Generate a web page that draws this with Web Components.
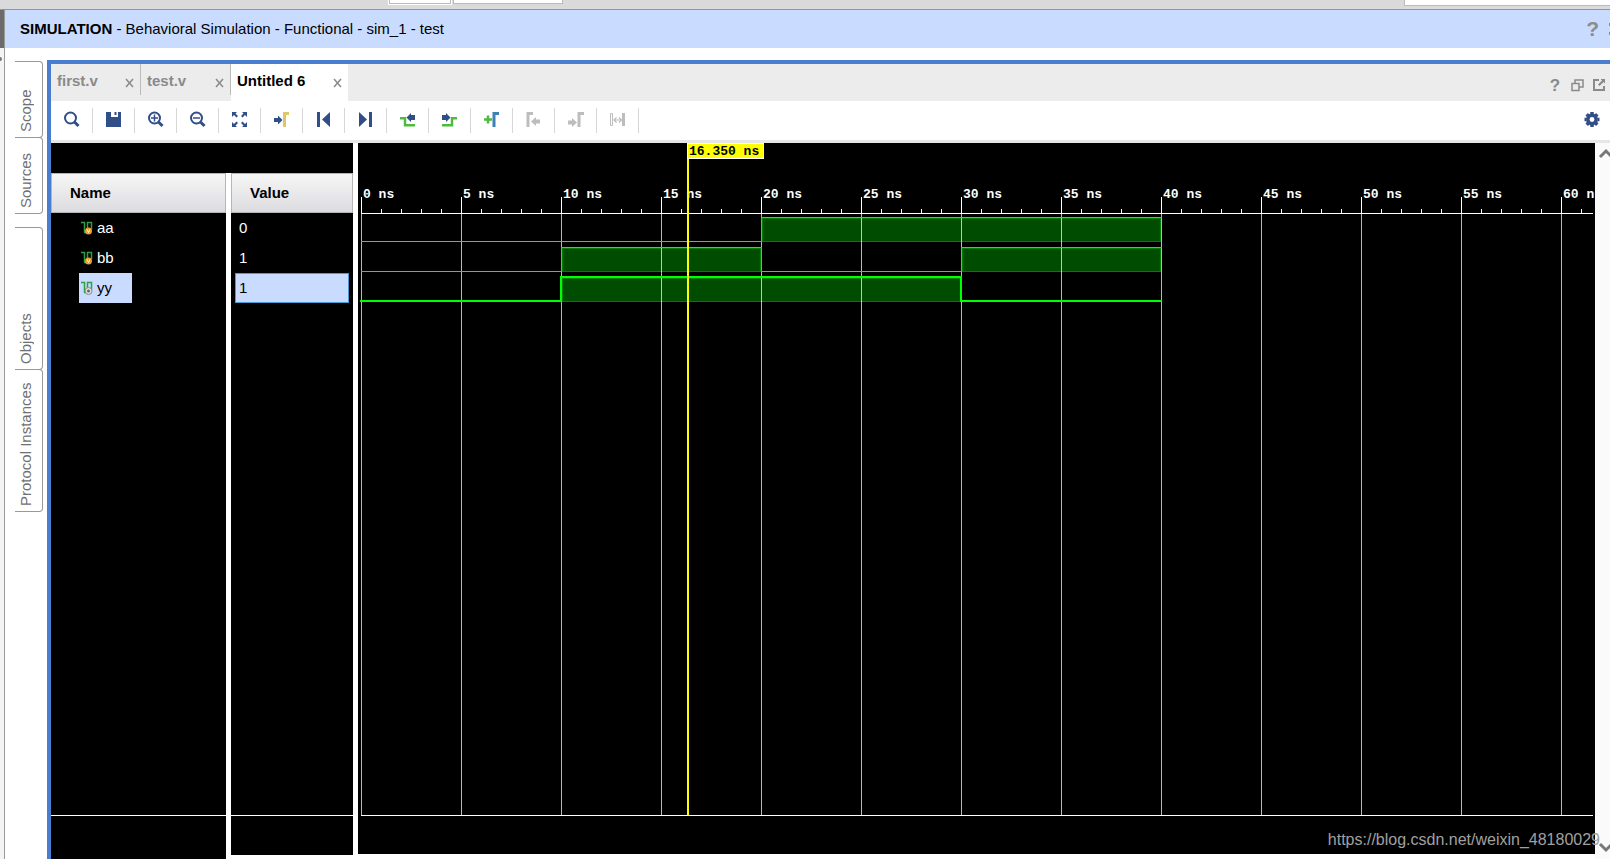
<!DOCTYPE html>
<html lang="en">
<head>
<meta charset="utf-8">
<title>Simulation</title>
<style>
html, body { margin: 0; height: 100%; }
body { font: 15px/20px "Liberation Sans", Arial, sans-serif; color: #000; background: #fff; overflow: hidden; }
</style>
</head>
<body>
<sim-app></sim-app>
<script>
const define = (name, html, setup) => {
  const t = document.createElement('template');
  t.innerHTML = html;
  customElements.define(name, class extends HTMLElement {
    connectedCallback() {
      if (this.shadowRoot) return;
      const root = this.attachShadow({ mode: 'open' });
      root.append(t.content.cloneNode(true));
      if (setup) setup(this, root);
    }
  });
};

const N = '#324e86', G = '#4cbb3e', Y = '#dfc766', D = '#bdbdbd', B = '#3c82b4';
const lens = `<circle cx="6.500" cy="7" r="5.500"/><path d="M10.500 11l4 4" stroke-width="3"/>`;
const signal = `<path fill="none" stroke="#2f9e44" stroke-width="1.500" d="M0 2.500h3.500v10M3 12.500h3.500V2.500h4v7"/>`;
const icons = {
  search: `<g fill="none" stroke="${N}" stroke-width="2">${lens}</g>`,
  save: `<path fill="${N}" d="M0 1h5v5h7V1h3v15H0z"/><path fill="${N}" d="M8.500 1h2v3h-2z"/>`,
  zoomin: `<g fill="none" stroke="${N}" stroke-width="2">${lens}<path d="M3 7h7M6.500 3.500v7" stroke-width="1.500"/></g>`,
  zoomout: `<g fill="none" stroke="${N}" stroke-width="2">${lens}<path d="M3 7h7" stroke-width="1.500"/></g>`,
  fit: `<g fill="${N}"><path d="M0 1h5L3.500 2.500 6 5 4.500 6.500 2 4 0 6zM15 1h-5l1.500 1.500L9 5l1.500 1.500L13 4l2 2zM0 16h5l-1.500-1.500L6 12l-1.500-1.500L2 13l-2-2zM15 16h-5l1.500-1.500L9 12l1.500-1.500L13 13l2-2z"/></g>`,
  gocursor: `<path fill="${N}" d="M0 7h4V4.500L8.500 9 4 13.500V11H0z"/><path d="M10.500 16V2.500H15" fill="none" stroke="${Y}" stroke-width="3"/>`,
  first: `<path fill="${N}" d="M1 1h3v15H1zM14 1v15L6 8.500z"/>`,
  last: `<path fill="${N}" d="M1 1v15l8-7.500zM11 1h3v15h-3z"/>`,
  prevtrans: `<path d="M0 7.200h5v7h10" fill="none" stroke="${G}" stroke-width="2.500"/><path fill="${N}" d="M15 4v5h-4v2L6.500 6.500 11 2v2z"/>`,
  nexttrans: `<path d="M0 14.200h10v-7h5" fill="none" stroke="${G}" stroke-width="2.500"/><path fill="${N}" d="M0 4v5h4v2l4.500-4.500L4 2v2z"/>`,
  addmarker: `<path d="M0 8.500h8M4 4.500v8" stroke="${G}" stroke-width="2.500"/><path d="M10 16V2.500h5" fill="none" stroke="${B}" stroke-width="3"/>`,
  prevmarker: `<path d="M2 16V2.500h5" fill="none" stroke="${D}" stroke-width="3"/><path fill="${D}" d="M14 8.500v4h-4V15l-5-4.500L10 6v2.500z"/>`,
  nextmarker: `<path d="M11 16V2.500h5" fill="none" stroke="${D}" stroke-width="3"/><path fill="${D}" d="M0 9.500v4h4V16l5-4.500L4 7v2.500z"/>`,
  swap: `<g fill="none" stroke="${D}"><path d="M.5 2.500h2v12h-2z"/><path d="M13.500 2v13" stroke-width="3"/><path d="M4 9h7M6.500 6.500L4 9l2.500 2.500M9 6.500L11.500 9 9 11.500" stroke-width="1.200"/></g>`,
  gear: `<g fill="none" stroke="${N}"><circle cx="8" cy="8.500" r="4.200" stroke-width="3.500"/><path stroke-width="3.500" d="M8 1v2M8 14v2M.5 8.500h2M13.500 8.500h2M2.700 3.200l1.500 1.500M11.800 12.300l1.500 1.500M13.300 3.200l-1.500 1.500M4.200 12.300l-1.500 1.500"/></g>`,
  restore: `<path fill="none" stroke="#8a8a8a" stroke-width="1.500" d="M6 6V3h8v7h-4M3 6.500h7v7H3z"/>`,
  float: `<path fill="none" stroke="#8a8a8a" stroke-width="2" d="M8 3H3v10h10V9"/><path fill="#8a8a8a" d="M9.500 2H14v4.500l-1.500-1.500-4 4-1.500-1.500 4-4z"/>`,
  up: `<path fill="none" stroke="#777" stroke-width="3" d="M2 12l6-6 6 6"/>`,
  down: `<path fill="none" stroke="#777" stroke-width="3" d="M2 5l6 6 6-6"/>`,
  sigv: `${signal}<circle cx="7.500" cy="11" r="3.500" fill="#f39a2d"/><path d="M6 9.500l1.500 3 1.500-3" fill="none" stroke="#fff"/>`,
  sigo: `${signal}<circle cx="7.500" cy="11" r="3.500" fill="#ddd" stroke="#8a8a8a"/><circle cx="7.500" cy="11" r="1.500" fill="#666"/>`
};
define('sim-icon', `<style>:host{display:block;width:16px;height:17px;flex:none}svg{display:block}</style>
<svg width="16" height="17" viewBox="0 0 16 17" aria-hidden="true"></svg>`,
(el, r) => { r.querySelector('svg').innerHTML = icons[el.getAttribute('name')]; });

define('app-strip', `<style>
:host{display:flex;height:9px;background:#dadada;border-bottom:1px solid #959595;padding-left:389px}
i{box-sizing:border-box;height:4px;background:#fff;border:solid #bbb;border-width:0 1px 1px}
.a{width:62px;margin-right:2px;outline:1px solid #fff}.b{width:110px}.c{width:206px;height:6px;margin-left:auto;border-right:0}
</style><i class="a"></i><i class="b"></i><i class="c"></i>`);

define('title-bar', `<style>
:host{display:flex;align-items:center;height:38px;background:#c9dcff;padding:0 0 0 15px}
h1{font:inherit;margin:0;flex:1}
button{font:bold 21px/20px "Liberation Sans",Arial,sans-serif;color:#8c8c8c;border:0;background:none;padding:0;margin-right:10px}
i{width:1px;height:12px;background:linear-gradient(#8c8c8c 3px,transparent 3px 9px,#8c8c8c 9px)}
</style><h1><slot></slot></h1><button aria-label="Help">?</button><i></i>`);

define('side-tab', `<style>
:host{display:block;box-sizing:border-box;border:1px solid #999;border-left:0;border-radius:0 4px 4px 0;margin-bottom:-1px;width:28px;height:77px}
:host([tall]){height:143px}
button{display:block;width:100%;height:100%;box-sizing:border-box;writing-mode:vertical-rl;transform:rotate(180deg);font:15px/20px "Liberation Sans",Arial,sans-serif;color:#707070;background:none;border:0;padding:5px 0 0 6px;text-align:left}
</style><button><slot></slot></button>`);

define('side-tabs', `<style>
:host{display:flex;flex-direction:column;width:32px;padding:13px 0 0 10px;flex:none}
side-tab.gap{margin-bottom:13px}
</style><side-tab>Scope</side-tab><side-tab class="gap">Sources</side-tab><side-tab tall>Objects</side-tab><side-tab tall>Protocol Instances</side-tab>`);

define('file-tab', `<style>
:host{display:flex;box-sizing:border-box;width:90px;height:31px;padding:7px 5px 0 6px;border-right:1px solid #bbb;color:#8a8a8a;font-weight:bold}
:host([active]){width:117px;height:37px;background:#fff;color:#000;border:0}
span{flex:1}
button{border:0;background:none;padding:4px 0 0;width:10px;height:20px}
svg{display:block}
</style><span><slot></slot></span><button aria-label="Close"><svg width="10" height="10"><path d="M1 1l7 8M8 1L1 9" stroke="#8a8a8a" stroke-width="1.500"/></svg></button>`);

define('tab-bar', `<style>
:host{display:flex;height:37px;background:#ececec}
nav{display:flex;flex:1}
div{display:flex;gap:6px;align-items:center;padding:6px 3px 0 0}
button{width:16px;height:18px;border:0;background:none;padding:0;color:#8a8a8a;font:bold 17px/18px "Liberation Sans",Arial,sans-serif}
</style><nav><file-tab>first.v</file-tab><file-tab>test.v</file-tab><file-tab active>Untitled 6</file-tab></nav>
<div><button aria-label="Help">?</button><button aria-label="Restore"><sim-icon name="restore"></sim-icon></button><button aria-label="Float"><sim-icon name="float"></sim-icon></button></div>`);

define('tool-bar', `<style>
:host{display:flex;align-items:center;height:39px;border-bottom:3px solid #e6e6e6}
button{box-sizing:border-box;width:42px;height:25px;padding:0 0 2px 13px;border:0;border-right:1px solid #d6d6d6;background:none}
.gear{margin-left:auto;border:0;width:26px;padding:0 0 2px}
</style><button class="gear" aria-label="Settings"><sim-icon name="gear"></sim-icon></button>`,
(el, r) => {
  const gear = r.querySelector('.gear');
  for (const n of ['search', 'save', 'zoomin', 'zoomout', 'fit', 'gocursor', 'first', 'last', 'prevtrans', 'nexttrans', 'addmarker', 'prevmarker', 'nextmarker', 'swap']) {
    const b = document.createElement('button');
    b.setAttribute('aria-label', n);
    b.innerHTML = `<sim-icon name="${n}"></sim-icon>`;
    gear.before(b);
  }
});

define('signal-column', `<style>
:host{display:flex;flex-direction:column;background:#000;color:#fff}
h2{font:bold 15px/20px "Liberation Sans",Arial,sans-serif;margin:0;color:#000;height:40px;box-sizing:border-box;border:1px solid #b5b5b5;background:linear-gradient(#f6f6f6,#dcdce0);padding:9px 0 0 18px}
.rows{flex:1}
.foot{height:var(--foot,43px);border-top:1px solid #fff}
</style><h2></h2><div class="rows"><slot></slot></div><div class="foot"></div>`,
(el, r) => { r.querySelector('h2').textContent = el.getAttribute('heading'); });

define('signal-name', `<style>
:host{display:flex;align-items:center;box-sizing:border-box;width:53px;height:30px;margin-left:28px;padding-left:2px}
:host([selected]){background:#c9dcff;color:#000}
</style><i></i><slot></slot>`,
(el, r) => {
  const icon = document.createElement('sim-icon');
  icon.setAttribute('name', el.getAttribute('icon'));
  r.querySelector('i').replaceWith(icon);
});

define('signal-value', `<style>
:host{display:flex;align-items:center;box-sizing:border-box;height:30px;margin:0 4px;padding-left:3px;border:1px solid transparent}
:host([selected]){background:#c9dcff;color:#000;border-color:#4a9bd5}
</style><slot></slot>`);

define('wave-view', `<style>
:host{display:flex;flex-direction:column;position:relative;background:#000;color:#fff;overflow:hidden;flex:1;min-width:0;margin-bottom:5px;font:bold 13px/16px "Liberation Mono",monospace}
.ruler{display:flex;height:70px;padding:44px 0 0 5px;box-sizing:border-box;flex:none}
.ruler span{width:100px;flex:none;white-space:nowrap}
.plot{position:absolute;inset:0;width:100%;height:100%}
output{position:absolute;left:329px;top:0;box-sizing:border-box;height:16px;width:77px;padding-left:1px;line-height:16px;background:#ff0;border:1px solid #fff;color:#000}
</style><div class="ruler"></div><svg class="plot" aria-hidden="true"></svg><output>16.350 ns</output>`,
(el, r) => {
  const X0 = 3, PX = 20, AXIS = 70;
  const ruler = r.querySelector('.ruler');
  for (let ns = 0; ns <= 60; ns += 5) {
    const lab = document.createElement('span');
    lab.textContent = ns + ' ns';
    ruler.append(lab);
  }
  const box = (x, y, w, h, c) => `<rect x="${x}" y="${y}" width="${w}" height="${h}" fill="${c}"/>`;
  const signals = [
    { top: 74, w: 1, runs: [[0, 20, 0], [20, 40, 1]] },
    { top: 104, w: 1, runs: [[0, 10, 0], [10, 20, 1], [20, 30, 0], [30, 40, 1]] },
    { top: 133, w: 2, runs: [[0, 10, 0], [10, 30, 1], [30, 40, 0]] }
  ];
  let fills = '', lines = '', ticks = '', grid = '';
  for (const g of signals) {
    const low = g.w === 2 ? 157 : g.top + 24, o = g.w - 1;
    for (const [a, b, v] of g.runs) {
      const x = X0 + a * PX, w = (b - a) * PX;
      if (v) {
        fills += box(x, g.top, w, 25 + o, '#008000') + box(x + 2, g.top + g.w + 1, w - 3, 23 - g.w + o, '#004c00');
        lines += box(x - o, g.top, w + 1, g.w, '#0f0');
      } else lines += box(x - o, low, w + g.w, g.w, '#0f0');
      if (a) lines += box(x - o, g.top, g.w, 25, '#0f0');
    }
  }
  for (let ns = 0; ns <= 61; ns++) {
    const x = X0 + ns * PX;
    ticks += ns % 5 ? box(x, 66, 1, 4, '#fff') : box(x, 54, 1, 16, '#fff');
    if (ns % 5 === 0) grid += `<svg x="${x}" y="71" width="1" height="100%"><rect width="1" height="100%" fill="#fff" fill-opacity=".72"/></svg>`;
  }
  r.querySelector('svg').innerHTML = fills + grid + ticks +
    `<rect x="3" y="${AXIS}" width="1232" height="1" fill="#fff"/>` + lines +
    `<rect x="329" y="0" width="2" height="100%" fill="#ff0"/>` +
    `<svg y="100%" width="100%" height="40" overflow="visible"><rect y="-39" width="100%" height="40" fill="#000"/><rect x="3" y="-39" width="1232" height="1" fill="#fff"/></svg>`;
});

define('scroll-rail', `<style>
:host{display:flex;flex-direction:column;justify-content:space-between;width:15px;background:#fafafa;overflow:hidden;flex:none;box-sizing:border-box;padding:2px 0 3px 3px}
button{border:0;background:none;padding:0}
</style><button aria-label="Scroll up"><sim-icon name="up"></sim-icon></button><button aria-label="Scroll down"><sim-icon name="down"></sim-icon></button>`);

define('wave-window', `<style>
:host{display:flex;flex-direction:column;flex:1;min-width:0;border:solid #4a7dcf;border-width:4px 0 0 4px}
.body{display:flex;flex:1;min-height:0}
.left{display:flex;flex-direction:column;width:302px;flex:none;margin-right:5px}
.top{height:30px;background:#000}
.cols{display:flex;flex:1;gap:5px}
.name{width:175px}.value{flex:1;margin-bottom:4px;--foot:39px}
</style><tab-bar></tab-bar><tool-bar></tool-bar>
<div class="body"><div class="left"><div class="top"></div><div class="cols">
<signal-column class="name" heading="Name"><signal-name icon="sigv">aa</signal-name><signal-name icon="sigv">bb</signal-name><signal-name icon="sigo" selected>yy</signal-name></signal-column>
<signal-column class="value" heading="Value"><signal-value>0</signal-value><signal-value>1</signal-value><signal-value selected>1</signal-value></signal-column>
</div></div><wave-view></wave-view><scroll-rail></scroll-rail></div>`);

define('sim-app', `<style>
:host{display:flex;flex-direction:column;height:100vh;position:relative}
.row{display:flex;flex:1;min-height:0}
.edge{width:4px;border-right:1px solid #999;background:#f4f4f4;flex:none}
.edge::before{content:"";display:block;height:38px;background:#6b6b6b}
.edge::after{content:"";display:block;width:2px;height:4px;margin-top:9px;background:#777;border-radius:0 2px 2px 0}
main{flex:1;display:flex;flex-direction:column;min-width:0}
.work{display:flex;flex:1;min-height:0}
wave-window{margin-top:12px}
.mark{position:absolute;right:10px;bottom:9px;font-size:16px;color:#a0a0a0}
</style><app-strip></app-strip><div class="row"><div class="edge"></div><main>
<title-bar><b>SIMULATION</b> - Behavioral Simulation - Functional - sim_1 - test</title-bar>
<div class="work"><side-tabs></side-tabs><wave-window></wave-window></div></main></div>
<span class="mark">https://blog.csdn.net/weixin_48180029</span>`);
</script>
</body>
</html>
